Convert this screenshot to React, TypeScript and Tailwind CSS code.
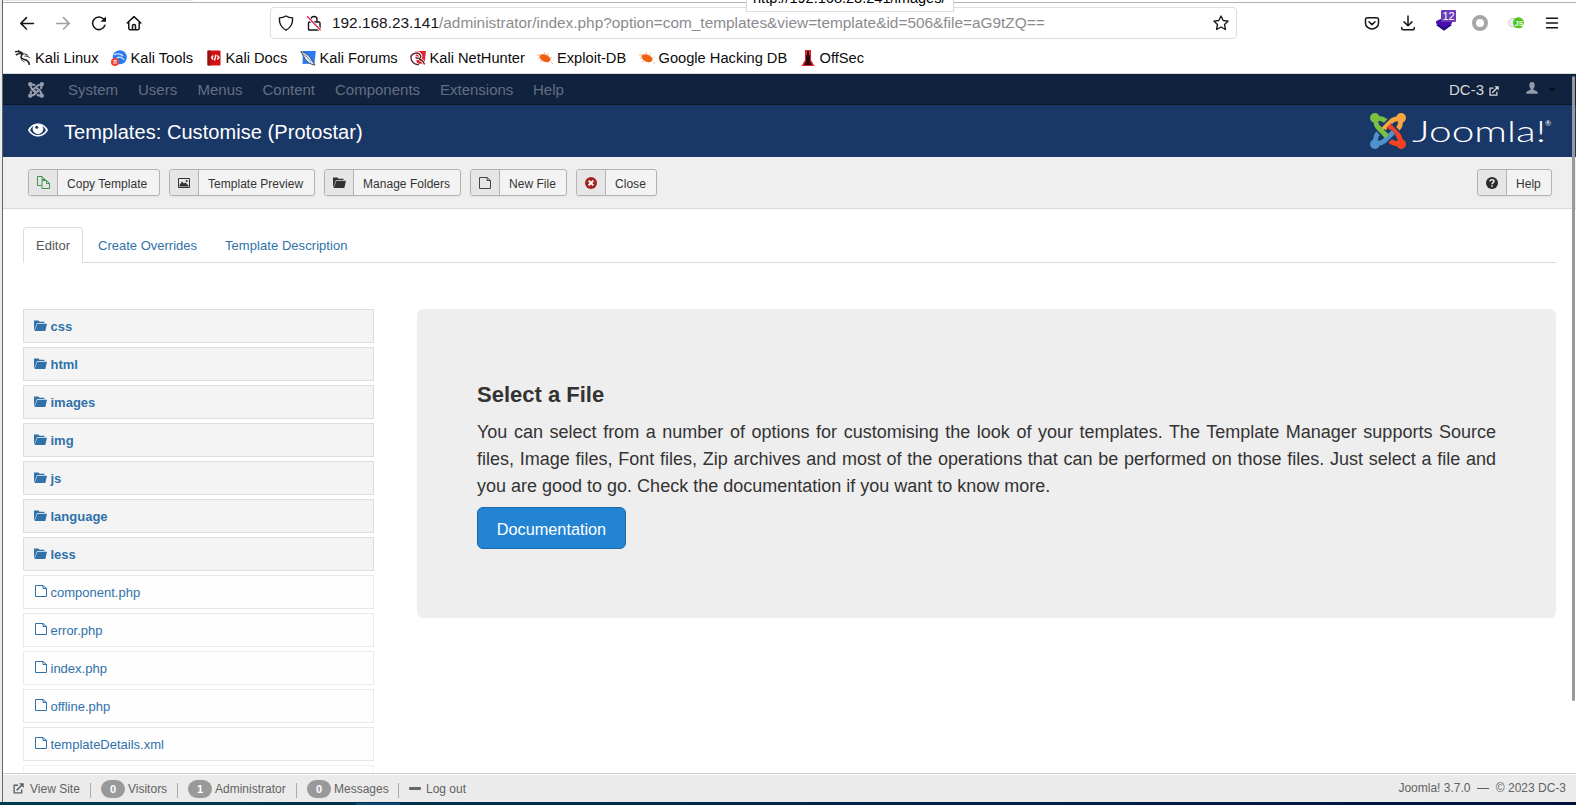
import React from "react";

type P = { children?: React.ReactNode; className?: string; box?: string };

function Svg({ children, className = "", box = "0 0 16 16" }: P) {
  return (
    <svg viewBox={box} className={`block shrink-0 ${className}`} fill="none">
      {children}
    </svg>
  );
}

const line = { stroke: "#15141a", strokeWidth: 1.5, strokeLinecap: "round" as const, strokeLinejoin: "round" as const };

function TabStrip() {
  return (
    <div className="relative h-[3px] shrink-0 border-b border-[#b0b0b4] bg-white">
      <div className="h-px w-[190px] bg-[#e8e8ea]" />
      <div className="absolute left-[743px] top-[-12px] z-10 h-[24px] w-[208px] border border-[#dcdcdf] bg-white pl-[6px] text-[14.550px] leading-[18px] text-black whitespace-nowrap">
        http://192.168.23.241/images/
      </div>
    </div>
  );
}

function AddressRow() {
  return (
    <div className="flex h-[40px] shrink-0 items-center pl-[16px] pr-[16px]">
      <Svg className="h-4 w-4">
        <path {...line} d="M14.5 8.4H2M7.5 2.6 1.8 8.4l5.7 5.6" />
      </Svg>
      <Svg className="ml-5 h-4 w-4 opacity-40">
        <path {...line} d="M1.5 8.4H14M8.5 2.6l5.7 5.8L8.500 14" />
      </Svg>
      <Svg className="ml-5 h-4 w-4">
        <path {...line} d="M13.9 10.300A6.300 6.300 0 1 1 12.800 4.300L14 5.500" />
        <path fill="#15141a" d="M15 1.400v5.400H9.600z" />
      </Svg>
      <Svg className="ml-[19px] h-4 w-4">
        <path {...line} d="M1.200 8 8 1.600 14.800 8M2.800 7v6.200a1.500 1.500 0 0 0 1.500 1.500h7.400a1.500 1.500 0 0 0 1.500-1.500V7M6.500 14.500v-3.400a1.500 1.500 0 0 1 3 0v3.400" />
      </Svg>
      <div className="ml-[128px] flex h-[32px] w-[967px] items-center rounded-[4px] border border-[#dddde0] pl-[7px] pr-[7px]">
        <Svg className="h-4 w-4">
          <path {...line} strokeWidth={1.4} d="M8 1c2 1.200 4.200 1.800 6.600 1.900.3 4.700-1.500 9.600-6.600 12.200C2.900 12.500 1.100 7.600 1.400 2.900 3.800 2.800 6 2.200 8 1z" />
        </Svg>
        <Svg className="ml-3 h-4 w-4">
          <path {...line} strokeWidth={1.4} d="M5 7V4.500a3 3 0 0 1 6 0V7M3.500 7h9.500a1 1 0 0 1 1 1v6a1 1 0 0 1-1 1H3.500a1 1 0 0 1-1-1V8a1 1 0 0 1 1-1z" />
          <path d="M1.500 1.800 14.800 15.500" stroke="#fff" strokeWidth="3" />
          <path d="M1.200 1.200 14.600 15.300" stroke="#e22850" strokeWidth="1.4" />
        </Svg>
        <div className="ml-[10px] flex-1 whitespace-nowrap text-[15.400px] leading-5 text-[#8b8b90]">
          <span className="text-[#15141a]">192.168.23.141</span>
          /administrator/index.php?option=com_templates&amp;view=template&amp;id=506&amp;file=aG9tZQ==
        </div>
        <Svg className="h-4 w-4">
          <path {...line} strokeWidth={1.3} d="m8 1 2.200 4.500 5 .6-3.700 3.400 1 5L8 12l-4.500 2.500 1-5L.8 6.100l5-.6z" />
        </Svg>
      </div>
      <div className="flex flex-1 items-center justify-end gap-5">
        <Svg className="h-4 w-4">
          <path {...line} d="M3.300 2.800h9.400a1.800 1.800 0 0 1 1.800 1.800v3.300a6.500 6 0 0 1-13 0V4.600a1.800 1.800 0 0 1 1.800-1.800zM5 6.800l3 2.800 3-2.800" />
        </Svg>
        <Svg className="h-4 w-4">
          <path {...line} d="M8 1v9.500M4 6.900l4 3.800 4-3.800M1.700 12.500v.8a1.500 1.500 0 0 0 1.500 1.500h9.600a1.500 1.500 0 0 0 1.500-1.500v-.8" />
        </Svg>
        <div className="relative h-4 w-4">
          <Svg className="h-4 w-4">
            <path fill="#1f0a78" d="m0 10 8-4 8 4-8 5.800z" />
            <path fill="#4b0cb0" d="m0 6.200 8-4 8 4v2l-8 4.800-8-4.800z" />
          </Svg>
          <div className="absolute left-[5px] top-[-5px] h-[12px] w-[15px] rounded-[1px] bg-[#6b3cb8] text-center text-[11px] leading-[12px] text-white">
            12
          </div>
        </div>
        <Svg className="h-4 w-4">
          <circle cx="8" cy="8" r="6" stroke="#a6a6a6" strokeWidth="4" />
        </Svg>
        <Svg className="h-4 w-4">
          <rect x=".5" y="3.500" width="13" height="8.500" rx="4.200" fill="#eee" stroke="#ccc" />
          <circle cx="10.500" cy="7.800" r="5.500" fill="#4cc417" />
          <text x="6.800" y="10.500" fontSize="7" fontWeight="700" fill="#fff">JS</text>
        </Svg>
        <Svg className="h-4 w-4">
          <path {...line} d="M2.500 3.300h11M2.500 8h11M2.500 12.700h11" />
        </Svg>
      </div>
    </div>
  );
}

const Dragon = () => (
  <Svg className="h-4 w-4">
    <path d="M0 1.800c3-.6 6 0 8 1.900M.8 5c2.500-1.500 5-1.800 7-.9M3 .8l4.500 2.700M7.800 4c-2.500 2-2 4.600.8 5.200 3 .6 5.500 1.400 5.800 5.700" stroke="#222" strokeWidth="1.600" />
    <path d="M7.800 4c2.500-.4 4.200.4 5.500 2M9.500 6.200c1.800-.5 3.200 0 5.200 1.600M6.500 6c-1 2.500 0 5 3 6" stroke="#333" strokeWidth="1" />
  </Svg>
);
const ToolsIcon = () => (
  <Svg className="h-4 w-4">
    <circle cx="8.800" cy="7.200" r="7" fill="#2a7bf3" />
    <path d="M3 5c3-2 7-1.400 9 1M5 9c2-3 6-2.500 8 1" stroke="#cfe2ff" strokeWidth="1.200" />
    <circle cx="4" cy="12" r="4" fill="#ef4136" />
    <path d="M2.400 10.500h3.200M3.200 10.500V14M5 10.500V14" stroke="#fff" strokeWidth=".8" />
  </Svg>
);
const DocsIcon = () => (
  <Svg className="h-4 w-4">
    <rect x="1.500" y=".5" width="13" height="15" rx="1" fill="#d11111" />
    <rect x="1.500" y=".5" width="3" height="15" fill="#8f1414" />
    <path d="M7.300 5.500 5.500 7.500l1.800 2M11.200 5.500l1.800 2-1.800 2M10 4.500l-1.500 6" stroke="#fff" strokeWidth="1.300" />
  </Svg>
);
const ForumsIcon = () => (
  <Svg className="h-4 w-4">
    <path d="M3 1h12.800l-1.300 12.500L2.500 14z" fill="#2a7bf3" />
    <path d="M.8 1.500C5 2 10.500 6.500 12 10.500l3 4.500c-5-.5-9.500-4-11-8z" fill="#dfe9f5" stroke="#3a4a60" strokeWidth="1" />
    <path d="M3 4c3 1.500 5 4 8 7.500" stroke="#55708f" strokeWidth=".8" />
  </Svg>
);
const HunterIcon = () => (
  <Svg className="h-4 w-4">
    <path d="M5 1h11l-1.500 12.500L7 14z" fill="#e8242c" />
    <path d="M.5 7c2-4.500 8-5.500 10-1.500 1.500 3.500-3 3.500-5 1.800M.5 7c-.5 5 4 8 8 7.500M9 9.500c3 0 4.500 2 5.500 5" stroke="#fff" strokeWidth="3.200" />
    <path d="M.5 7c2-4.500 8-5.500 10-1.500 1.500 3.500-3 3.500-5 1.800M1 7c-.5 5 4 8 8 7.500M9 9.500c3 0 4.500 2 5.500 5" stroke="#5a2026" strokeWidth="1.300" />
  </Svg>
);
const BugIcon = () => (
  <Svg className="h-4 w-4">
    <ellipse cx="8" cy="8.200" rx="5.800" ry="3.600" transform="rotate(24 8 8.200)" fill="#f0600f" />
    <path d="M0 5h4M1 8h3M3 12l3-2M7 2l1 3M11 3v3M15 7l-2 2M14 12l2 2" stroke="#f7a070" strokeWidth=".8" />
  </Svg>
);
const OffSecIcon = () => (
  <Svg className="h-4 w-4">
    <path d="M5 0h6v10l3.500 6h-13L5 10z" fill="#e0252b" />
    <path d="M7 1h2v3l1 2v5l2 4H4l2-4V6l1-2z" fill="#2a0a0c" />
  </Svg>
);

const bookmarks: [string, React.FC, string][] = [
  ["Kali Linux", Dragon, "w-[95.500px]"],
  ["Kali Tools", ToolsIcon, "w-[95px]"],
  ["Kali Docs", DocsIcon, "w-[94px]"],
  ["Kali Forums", ForumsIcon, "w-[110px]"],
  ["Kali NetHunter", HunterIcon, "w-[127.500px]"],
  ["Exploit-DB", BugIcon, "w-[101.500px]"],
  ["Google Hacking DB", BugIcon, "w-[161px]"],
  ["OffSec", OffSecIcon, "w-[90px]"],
];

function Bookmarks() {
  return (
    <div className="flex h-[31px] shrink-0 items-center border-b border-[#d9d9dc] pl-[12px] text-[14.667px] text-[#0c0c0d]">
      {bookmarks.map(([label, Icon, w]) => (
        <div key={label} className={`flex shrink-0 items-center gap-1 whitespace-nowrap ${w}`}>
          <Icon />
          <span>{label}</span>
        </div>
      ))}
    </div>
  );
}

const armEnd = "m9.500 16.500 9.500 9.500";

/* Interlocked Joomla mark: one arm rotated four times, each passing over the next */
function JoomlaMark({ className, colors, gap }: { className: string; colors: string[]; gap: string }) {
  return (
    <svg viewBox="0 0 40 40" className={`block shrink-0 ${className}`} fill="none">
      {[0, 90, 180, 270].map((r, i) => (
        <g key={r} transform={`rotate(${r} 20 20)`}>
          <circle cx="5.400" cy="5.400" r="5.400" fill={colors[i]} />
          <path d="M6.500 6c5.500-.3 8.500.5 11 3" stroke={colors[i]} strokeWidth="5.500" />
          <path d="M11 18l8 8" stroke={gap} strokeWidth="7.500" />
          <path d="M6.200 6c0 6 .8 8 3.300 10.500l9.500 9.500" stroke={colors[i]} strokeWidth="5.500" />
        </g>
      ))}
      <path d="m13.500 20.500 2 2" stroke={gap} strokeWidth="7.500" />
      <path d={armEnd} stroke={colors[0]} strokeWidth="5.500" />
    </svg>
  );
}

const ExternalIcon = ({ className }: { className: string }) => (
  <Svg className={className} box="0 0 12 12">
    <path d="M5.500 2.500H1.200v8.300h8.300V7" stroke="currentColor" strokeWidth="1.500" />
    <path d="M4 8 9.500 2.500" stroke="currentColor" strokeWidth="1.700" />
    <path d="M6.500.3h5.200v5.200z" fill="currentColor" />
  </Svg>
);

const menu: [string, string][] = [
  ["System", "w-[70px]"],
  ["Users", "w-[59.500px]"],
  ["Menus", "w-[65px]"],
  ["Content", "w-[72.500px]"],
  ["Components", "w-[105px]"],
  ["Extensions", "w-[93px]"],
  ["Help", "w-[60px]"],
];

function NavBar() {
  return (
    <div className="flex h-[31px] shrink-0 items-center border-b border-[#0b1528] bg-[#11223e] pl-[25px] pt-[2px] text-[15px] text-[#626f82]">
      <JoomlaMark className="mr-[24px] h-4 w-4" gap="#11223e" colors={["#969dab", "#969dab", "#969dab", "#969dab"]} />
      {menu.map(([m, w]) => (
        <div key={m} className={`shrink-0 ${w}`}>{m}</div>
      ))}
      <div className="flex flex-1 items-center justify-end pr-[20px]">
        <span className="text-[#d9d9d9]">DC-3</span>
        <ExternalIcon className="ml-[5px] mt-px h-[10px] w-[10px] text-[#d9d9d9]" />
        <Svg className="mb-[4px] ml-[27px] h-[12px] w-[12px]" box="0 0 12 12">
          <path fill="#949ba8" d="M6 0C4 0 3.200 1.500 3.300 3.200 3.400 5 4 6.200 4.600 6.800v1L1 9.200Q.2 9.700.2 11.700h11.600q0-2-.8-2.500L7.400 7.800v-1C8 6.200 8.600 5 8.700 3.200 8.800 1.500 8 0 6 0z" />
        </Svg>
        <Svg className="ml-[11px] h-[4px] w-[7px]" box="0 0 8 4">
          <path fill="#060b14" d="M0 0h8L4 4z" />
        </Svg>
      </div>
    </div>
  );
}

function TitleBar() {
  return (
    <div className="flex h-[52px] shrink-0 items-center bg-[#1a3867] pl-[25px] pr-[24px] text-white">
      <Svg className="mb-[3px] h-[14px] w-[20px]" box="0 0 20 14">
        <path fill="#fff" fillRule="evenodd" d="M10 .5C5.500.5 2 3 0 7c2 4 5.500 6.500 10 6.500S18 11 20 7C18 3 14.500.5 10 .5zM10 12C6.500 12 3.700 10.200 2 7.300c.9-1.800 2-3.200 3.600-4.200A5.200 5.200 0 1 0 14.400 3.100C16 4.100 17.100 5.500 18 7.300 16.300 10.200 13.500 12 10 12z" />
        <circle cx="10" cy="6" r="4.600" fill="#fff" />
        <circle cx="8.700" cy="4.200" r="1.500" fill="#1a3867" />
      </Svg>
      <h1 className="ml-4 pt-[2px] text-[20px] leading-9 tracking-[0.060px]">Templates: Customise (Protostar)</h1>
      <div className="flex flex-1 justify-end">
        <JoomlaMark className="h-[36px] w-[36px]" gap="#1a3867" colors={["#7ac143", "#f9a541", "#f44321", "#5091cd"]} />
        <svg viewBox="0 0 140 36" className="ml-[6px] block h-[36px] w-[140px] overflow-visible" fill="#fff" fontFamily="Lato">
          <text x="0" y="29" textLength="18" lengthAdjust="spacingAndGlyphs" fontWeight="300" fontSize="30">J</text>
          <text x="17" y="29" textLength="117" lengthAdjust="spacingAndGlyphs" fontWeight="300" fontSize="30">oomla!</text>
          <text x="133" y="13" fontSize="7.500">®</text>
        </svg>
      </div>
    </div>
  );
}

const FileIcon = ({ className = "" }: { className?: string }) => (
  <Svg className={className} box="0 0 12 14">
    <path d="M.5 1.500h7.500l3.500 3v8H.5zM8 1.500v3h3.500" stroke="currentColor" strokeWidth="1" />
  </Svg>
);
const FolderIcon = ({ className = "" }: { className?: string }) => (
  <Svg className={className} box="0 0 13 11">
    <path fill="currentColor" d="M0 .5h4.500l1 1.300h5V3H3L1 8.500 0 10.500zM3.300 3.800H13L11.300 11H.6z" />
  </Svg>
);

const buttons: [string, React.ReactNode, string][] = [
  ["Copy Template", (
    <Svg key="i" className="h-[13px] w-[13px]" box="0 0 13 13">
      <path d="M4.500 9.500h-4v-9h4.500L8 3.500v1M5 .5v3h3M5 4.500h4.500l3 3v5H5zM9.500 4.500v3h3" stroke="#3f9350" />
    </Svg>
  ), "w-[132px]"],
  ["Template Preview", (
    <Svg key="i" className="h-[10px] w-[12px]" box="0 0 12 10">
      <path d="M.5.500h11v9H.5z" stroke="#333" />
      <path fill="#333" d="M1.500 8.500V7l2.500-3.500 2 2L7.500 4.500l3 3v1z" />
      <circle cx="8.700" cy="2.900" r="1" fill="#333" />
    </Svg>
  ), "w-[146px]"],
  ["Manage Folders", <FolderIcon key="i" className="h-[11px] w-[13px]" />, "w-[137px]"],
  ["New File", <FileIcon key="i" className="h-[14px] w-[12px] text-[#444]" />, "w-[97px]"],
  ["Close", (
    <Svg key="i" className="h-[12px] w-[12px]" box="0 0 12 12">
      <circle cx="6" cy="6" r="6" fill="#a02622" />
      <path d="m3.700 3.700 4.600 4.600m0-4.600L3.700 8.300" stroke="#fff" strokeWidth="1.900" />
    </Svg>
  ), "w-[81px]"],
];

const helpIcon = (
  <Svg className="h-[12px] w-[12px]" box="0 0 12 12">
    <circle cx="6" cy="6" r="6" fill="#2b2b2b" />
    <path d="M4 4.600C4 2 8.200 2.200 8 4.400 7.900 5.700 6.100 5.600 6.100 7.200M6.100 8.200v1.600" stroke="#eee" strokeWidth="1.500" />
  </Svg>
);

function ToolButton({ label, icon, w }: { label: string; icon: React.ReactNode; w: string }) {
  return (
    <button className={`flex h-[27px] shrink-0 overflow-hidden whitespace-nowrap rounded-[3px] border border-[#b3b3b3] bg-[#f3f3f3] text-[12px] leading-[27px] text-[#333] shadow-[0_1px_2px_rgba(0,0,0,0.05)] ${w}`}>
      <span className="flex h-full w-[29px] shrink-0 items-center justify-center border-r border-[#b3b3b3] bg-[#e6e6e6]">{icon}</span>
      <span className="pl-[9px] pt-px tracking-[0.030px]">{label}</span>
    </button>
  );
}

function Toolbar() {
  return (
    <div className="flex h-[52px] shrink-0 items-center gap-[9px] border-b border-[#dadada] bg-[#efefef] pl-[25px] pr-[24px]">
      {buttons.map(([label, icon, w]) => (
        <ToolButton key={label} label={label} icon={icon} w={w} />
      ))}
      <div className="flex-1" />
      <ToolButton label="Help" icon={helpIcon} w="w-[75px]" />
    </div>
  );
}

const folders = ["css", "html", "images", "img", "js", "language", "less"];
const files = ["component.php", "error.php", "index.php", "offline.php", "templateDetails.xml"];

function Content() {
  return (
    <div className="flex min-h-0 flex-1 flex-col overflow-hidden bg-white pl-[20px] pr-[20px] pt-[18px]">
      <div className="flex h-[36px] shrink-0 border-b border-[#ddd] text-[13px] leading-[35px] text-[#3071a9]">
        <div className="h-[36px] w-[60px] rounded-t-[4px] border border-b-0 border-[#ddd] bg-white pl-[12px] text-[#555]">Editor</div>
        <div className="ml-[15px] pt-px">Create Overrides</div>
        <div className="ml-[28px] pt-px tracking-[0.060px]">Template Description</div>
      </div>
      <div className="mt-[46px] flex items-start gap-[43px]">
        <div className="flex w-[351px] shrink-0 flex-col gap-1 text-[13px] leading-[33px] text-[#3071a9]">
          {folders.map((f) => (
            <div key={f} className="flex h-[34px] shrink-0 border border-[#ddd] bg-[#f4f4f4] pl-[10px] font-bold">
              <FolderIcon className="mr-[3.500px] mt-[10px] h-[11px] w-[13px]" />
              {f}
            </div>
          ))}
          {files.map((f) => (
            <div key={f} className="flex h-[34px] shrink-0 border border-[#e9e9e9] bg-[#fefefe] pl-[11px]">
              <FileIcon className="mr-[3.500px] mt-[8px] h-[14px] w-[12px]" />
              {f}
            </div>
          ))}
          <div className="h-[34px] shrink-0 border border-[#f1f1f1] bg-[#fefefe]" />
        </div>
        <div className="h-[309px] flex-1 rounded-[6px] bg-[#eee] px-[60px] pt-[71px] text-[#333]">
          <h2 className="text-[22px] font-bold leading-[30px]">Select a File</h2>
          <p className="mt-[9px] text-justify text-[18px] leading-[27px]">
            You can select from a number of options for customising the look of your templates. The Template Manager supports Source files, Image files, Font files, Zip archives and most of the operations that can be performed on those files. Just select a file and you are good to go. Check the documentation if you want to know more.
          </p>
          <button className="mt-[7px] h-[42px] w-[149px] rounded-[6px] border border-[#1a68a8] bg-[#2384d3] pt-[2px] text-[16.250px] text-white">
            Documentation
          </button>
        </div>
      </div>
    </div>
  );
}

const Badge = ({ n }: { n: number }) => (
  <span className="mr-[3px] flex h-[18px] w-[24px] items-center justify-center rounded-full bg-[#999] text-[11px] font-bold text-white">{n}</span>
);
const Sep = ({ m }: { m: string }) => <span className={`mt-[3px] h-[15px] w-px bg-[#aaa] ${m}`} />;

function StatusBar() {
  return (
    <div className="flex h-[29px] shrink-0 items-center whitespace-nowrap border-t border-[#cfcfcf] bg-[#ebebeb] pl-[10px] pr-[10px] pt-[2px] text-[12px] text-[#626262] shadow-[inset_0_1px_0_#fafafa]">
      <ExternalIcon className="mb-[2px] mr-[6px] h-[11px] w-[11px]" />
      <span className="w-[50px]">View Site</span>
      <Sep m="ml-[10px] mr-[10px]" />
      <Badge n={0} />
      <span className="w-[39px]">Visitors</span>
      <Sep m="ml-[10px] mr-[10px]" />
      <Badge n={1} />
      <span className="w-[71px]">Administrator</span>
      <Sep m="ml-[10px] mr-[10px]" />
      <Badge n={0} />
      <span className="w-[54px]">Messages</span>
      <Sep m="ml-[10px] mr-[10px]" />
      <span className="mb-[2px] mr-[5px] h-[3px] w-[12px] rounded-[1px] bg-[#666]" />
      <span>Log out</span>
      <span className="flex-1 pb-[2px] text-right">Joomla! 3.7.0 &nbsp;—&nbsp; © 2023 DC-3</span>
    </div>
  );
}

export default function App() {
  return (
    <div className="relative flex h-[805px] w-[1576px] flex-col overflow-hidden bg-white font-['Liberation_Sans',Arial,sans-serif]">
      <div className="flex min-h-0 flex-1 flex-col border-l-2 border-[#ececec]">
        <div className="flex min-h-0 flex-1 flex-col border-l border-[#666]">
          <TabStrip />
          <AddressRow />
          <Bookmarks />
          <NavBar />
          <TitleBar />
          <Toolbar />
          <Content />
          <StatusBar />
        </div>
      </div>
      <div className="flex h-[3px] shrink-0 bg-linear-to-r from-[#003a52] to-[#00103c]">
        <div className="ml-[356px] mt-px w-[44px] bg-[#0d4a75]" />
      </div>
      <div className="absolute right-px top-[76px] h-[625px] w-[3px] rounded-full bg-[#999]" />
    </div>
  );
}
